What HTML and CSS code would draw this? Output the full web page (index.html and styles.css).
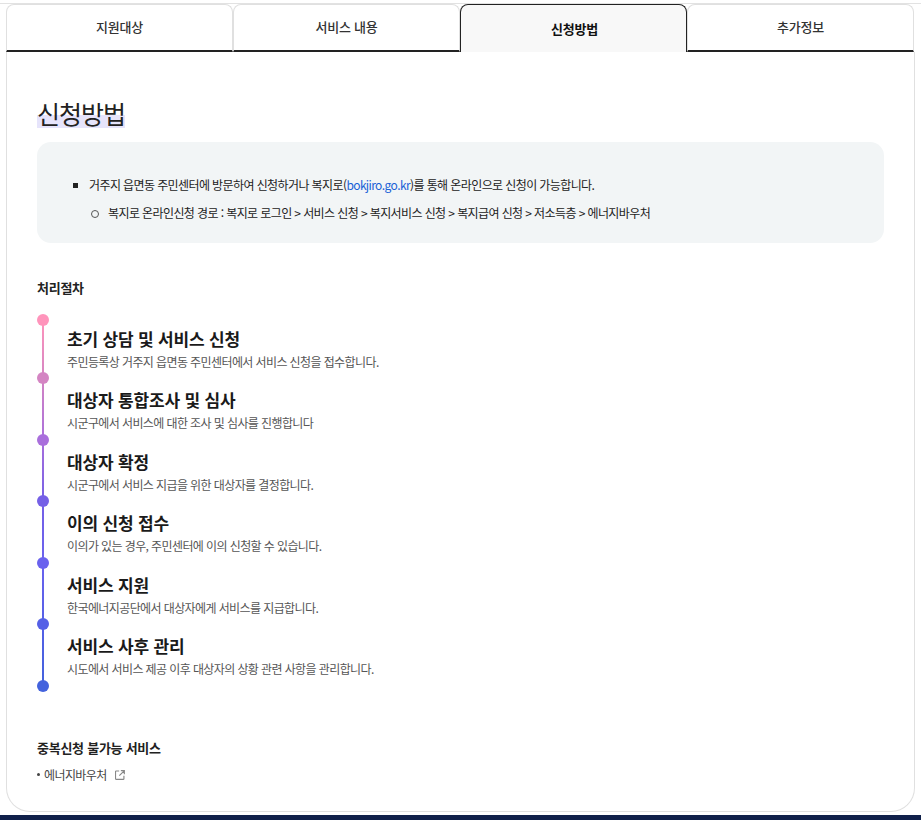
FILE: index.html
```html
<!DOCTYPE html>
<html lang="ko">
<head>
<meta charset="utf-8">
<title>신청방법</title>
<link rel="stylesheet" href="styles.css">
</head>
<body>
<div class="top-line"></div>
<main class="page">
  <nav class="tabs">
    <a class="tab">지원대상</a>
    <a class="tab">서비스 내용</a>
    <a class="tab active">신청방법</a>
    <a class="tab">추가정보</a>
  </nav>
  <section class="card">
    <h2 class="title"><span>신청방법</span></h2>
    <div class="notice">
      <ul class="l1">
        <li>거주지 읍면동 주민센터에 방문하여 신청하거나 복지로(<a class="link">bokjiro.go.kr</a>)를 통해 온라인으로 신청이 가능합니다.
          <ul class="l2">
            <li>복지로 온라인신청 경로 : 복지로 로그인 &gt; 서비스 신청 &gt; 복지서비스 신청 &gt; 복지급여 신청 &gt; 저소득층 &gt; 에너지바우처</li>
          </ul>
        </li>
      </ul>
    </div>
    <h3 class="sub first">처리절차</h3>
    <div class="timeline">
      <div class="step"><i class="dot c1"></i><i class="bar b1"></i><h4>초기 상담 및 서비스 신청</h4><p>주민등록상 거주지 읍면동 주민센터에서 서비스 신청을 접수합니다.</p></div>
      <div class="step"><i class="dot c2"></i><i class="bar b2"></i><h4>대상자 통합조사 및 심사</h4><p>시군구에서 서비스에 대한 조사 및 심사를 진행합니다</p></div>
      <div class="step"><i class="dot c3"></i><i class="bar b3"></i><h4>대상자 확정</h4><p>시군구에서 서비스 지급을 위한 대상자를 결정합니다.</p></div>
      <div class="step"><i class="dot c4"></i><i class="bar b4"></i><h4>이의 신청 접수</h4><p>이의가 있는 경우, 주민센터에 이의 신청할 수 있습니다.</p></div>
      <div class="step"><i class="dot c5"></i><i class="bar b5"></i><h4>서비스 지원</h4><p>한국에너지공단에서 대상자에게 서비스를 지급합니다.</p></div>
      <div class="step"><i class="dot c6"></i><i class="bar b6"></i><h4>서비스 사후 관리</h4><p>시도에서 서비스 제공 이후 대상자의 상황 관련 사항을 관리합니다.</p><i class="dot c7 end"></i></div>
    </div>
    <h3 class="sub second">중복신청 불가능 서비스</h3>
    <div class="related">
      <span class="bullet"></span><span>에너지바우처</span>
      <svg class="ext" viewBox="0 0 12 12" width="10" height="10" aria-hidden="true"><path d="M5 1.2H1.5a.9.9 0 0 0-.9.9v8.3a.9.9 0 0 0 .9.9h8.3a.9.9 0 0 0 .9-.9V7M7 .8h4.2V5M11 1 5.2 6.8" fill="none" stroke="#888" stroke-width="1.4"/></svg>
    </div>
  </section>
</main>
<footer class="foot"></footer>
</body>
</html>
```
FILE: styles.css
```css
* { box-sizing: border-box; }
html, body { margin: 0; padding: 0; background: #fff; }
body { height: 820px; overflow: hidden; font-family: "Noto Sans CJK KR", "Noto Sans", sans-serif; color: #222; display: flex; flex-direction: column; }
.top-line { height: 1px; margin-top: 3px; background: #e2e2e2; flex: none; }
.page { width: 909px; margin-left: 6px; flex: none; }
.tabs { display: grid; grid-template-columns: repeat(4, 227px); height: 48px; position: relative; z-index: 1; }
.tab { display: flex; align-items: center; justify-content: center; font-size: 13px; letter-spacing: -0.2px; color: #333; font-weight: 500; border: 1px solid #e0e0e0; border-bottom: 2px solid #222; border-radius: 8px 8px 0 0; padding-bottom: 2px; }
.tab.active { background: #f8f8f8; border: 1px solid #222; border-bottom: 0; color: #111; font-weight: 700; padding-bottom: 1px; padding-left: 2px; }
.card { height: 760px; border: 1px solid #e0e0e0; border-top: 0; border-radius: 0 0 24px 24px; padding: 47px 30px 0; }
.title { margin: 0; height: 28px; font-size: 25px; font-weight: 400; line-height: 28px; letter-spacing: -0.04em; color: #222; }
.title span { display: inline-block; background: linear-gradient(transparent 52%, #e6e4fb 52%); height: 27px; line-height: 25px; }
.notice { margin-top: 15px; background: #f2f5f6; border-radius: 14px; height: 101px; padding: 33px 0 0 36px; font-size: 12px; line-height: 20px; color: #222; letter-spacing: -0.05em; }
.l1 { margin: 0; padding: 0; list-style: none; }
.l1 > li { padding-left: 16px; position: relative; }
.l1 > li::before { content: ""; position: absolute; left: 0; top: 8px; width: 5px; height: 5px; background: #222; }
.l2 { margin: 8px 0 0; padding: 0; list-style: none; }
.l2 > li { padding-left: 19px; position: relative; }
.l2 > li::before { content: ""; position: absolute; left: 2px; top: 7px; width: 6px; height: 6px; border: 1px solid #555; border-radius: 50%; }
.link { color: #1b62d6; }
.sub { margin: 0; font-size: 13px; font-weight: 700; color: #222; line-height: 20px; letter-spacing: -0.02em; }
.sub.first { margin-top: 35px; }
.timeline { margin-top: 22px; }
.step { position: relative; height: 61.6px; padding-left: 30px; padding-top: 8px; }
.step:first-child { height: 58px; padding-top: 5px; }
.step h4 { margin: 0; font-size: 17px; line-height: 28px; font-weight: 700; color: #1a1a1a; letter-spacing: -0.01em; }
.step p { margin: 0; font-size: 12px; line-height: 18px; color: #555; letter-spacing: -0.05em; }
.dot { position: absolute; left: 0; top: -6px; width: 12px; height: 12px; border-radius: 50%; z-index: 1; }
.dot.end { top: auto; bottom: -6px; }
.bar { position: absolute; left: 5.25px; top: 0; bottom: 0; width: 1.5px; }
.c1 { background: #ff94bb; } .c2 { background: #d485c3; } .c3 { background: #a96fdc; }
.c4 { background: #7560e6; } .c5 { background: #6a62ee; } .c6 { background: #5560e6; } .c7 { background: #4362dd; }
.b1 { background: linear-gradient(#ff94bb, #d485c3); }
.b2 { background: linear-gradient(#d485c3, #a96fdc); }
.b3 { background: linear-gradient(#a96fdc, #7560e6); }
.b4 { background: linear-gradient(#7560e6, #6a62ee); }
.b5 { background: linear-gradient(#6a62ee, #5560e6); }
.b6 { background: linear-gradient(#5560e6, #4362dd); }
.sub.second { margin-top: 52px; }
.related { margin-top: 7px; display: flex; align-items: center; font-size: 12px; color: #444; line-height: 20px; letter-spacing: -0.05em; }
.bullet { width: 3px; height: 3px; border-radius: 50%; background: #444; margin-right: 4px; }
.ext { margin-left: 8px; }
.foot { flex: none; margin-top: 3px; height: 20px; background: #10204a; }
```
